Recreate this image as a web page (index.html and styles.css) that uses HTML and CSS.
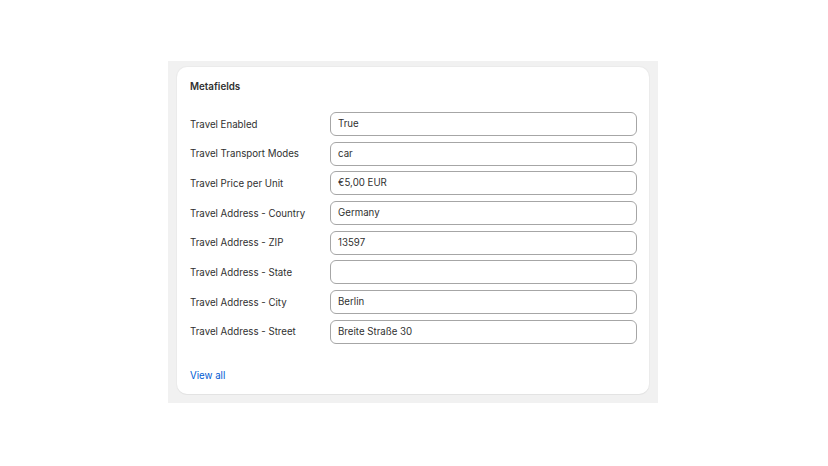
FILE: index.html
```html
<!DOCTYPE html>
<html>
<head>
<meta charset="utf-8">
<link rel="stylesheet" href="styles.css">
</head>
<body>
<div class="frame">
  <div class="card">
    <h2 class="title">Metafields</h2>
    <div class="rows">
      <div class="row"><span class="label">Travel Enabled</span><div class="field">True</div></div>
      <div class="row"><span class="label">Travel Transport Modes</span><div class="field">car</div></div>
      <div class="row"><span class="label">Travel Price per Unit</span><div class="field">€5,00 EUR</div></div>
      <div class="row"><span class="label">Travel Address - Country</span><div class="field">Germany</div></div>
      <div class="row"><span class="label">Travel Address - ZIP</span><div class="field">13597</div></div>
      <div class="row"><span class="label">Travel Address - State</span><div class="field"></div></div>
      <div class="row"><span class="label">Travel Address - City</span><div class="field">Berlin</div></div>
      <div class="row"><span class="label">Travel Address - Street</span><div class="field">Breite Straße 30</div></div>
    </div>
    <a class="link" href="#">View all</a>
  </div>
</div>
</body>
</html>
```
FILE: styles.css
```css
html, body {
  margin: 0;
  padding: 0;
  background: #ffffff;
}
body {
  font-family: Inter, "Noto Sans", sans-serif;
  color: #303030;
  padding-top: 61px;
  padding-left: 168px;
}
.frame {
  width: 490px;
  height: 342px;
  box-sizing: border-box;
  background: #f1f1f1;
  padding: 6px 9px 9px 9px;
}
.card {
  background: #ffffff;
  border-radius: 10px;
  height: 327px;
  box-sizing: border-box;
  padding: 13px 12px 0 13px;
  box-shadow: 0 1px 0 #e3e3e3, 0 0 0 1px #ebebeb;
  display: flex;
  flex-direction: column;
}
.title {
  margin: 0;
  font-size: 9.8px;
  font-weight: 600;
  line-height: 14px;
  color: #303030;
}
.rows {
  margin-top: 18px;
  display: flex;
  flex-direction: column;
  gap: 5.7px;
}
.row {
  display: flex;
  align-items: center;
}
.label {
  width: 140px;
  flex: none;
  font-size: 9.7px;
  color: #303030;
}
.field {
  flex: 1;
  height: 24px;
  box-sizing: border-box;
  border: 1px solid #a6a6a6;
  border-radius: 6px;
  padding: 0 7px;
  font-size: 9.7px;
  line-height: 22px;
  color: #303030;
}
.link {
  margin-top: 26px;
  font-size: 9.7px;
  color: #005bd3;
  text-decoration: none;
}
```
